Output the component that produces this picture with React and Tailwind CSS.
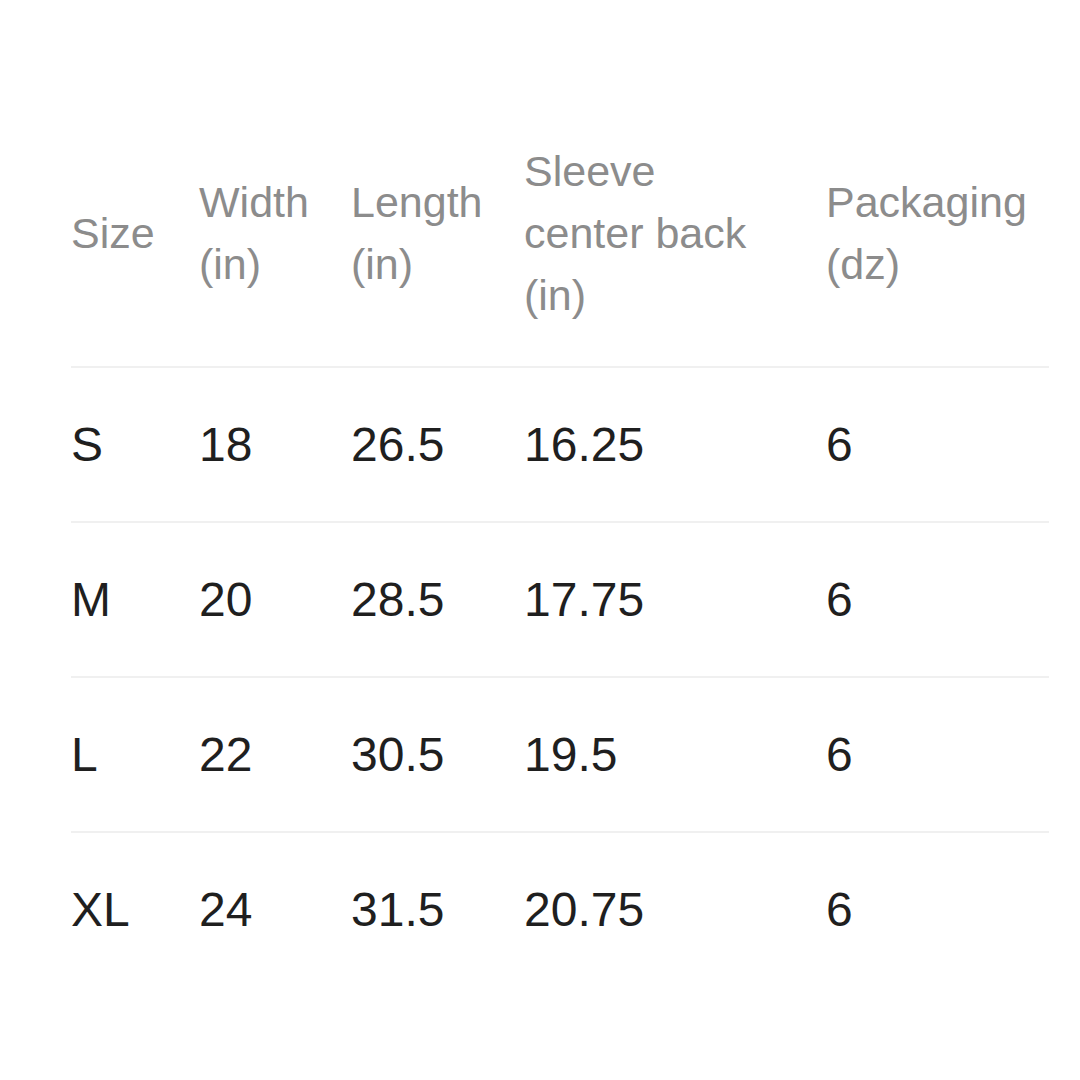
const rows = [
  { size: 'S', width: '18', length: '26.5', sleeve: '16.25', pack: '6' },
  { size: 'M', width: '20', length: '28.5', sleeve: '17.75', pack: '6' },
  { size: 'L', width: '22', length: '30.5', sleeve: '19.5', pack: '6' },
  { size: 'XL', width: '24', length: '31.5', sleeve: '20.75', pack: '6' },
];

export default function App() {
  return (
    <div className="w-[1080px] h-[1080px] bg-white overflow-hidden pt-[100px] pl-[71px]" style={{ fontFamily: '"Liberation Sans", Arial, sans-serif' }}>
      <table className="w-[978px] border-collapse table-fixed">
        <colgroup>
          <col className="w-[128px]" />
          <col className="w-[152px]" />
          <col className="w-[173px]" />
          <col className="w-[302px]" />
          <col className="w-[223px]" />
        </colgroup>
        <thead>
          <tr className="border-b-2 border-[#f0f0f0] text-[43px] leading-[62px] text-[#8c8c8c] text-left">
            <th className="font-normal py-[40px] align-middle">Size</th>
            <th className="font-normal py-[40px] align-middle">Width<br />(in)</th>
            <th className="font-normal py-[40px] align-middle">Length<br />(in)</th>
            <th className="font-normal py-[40px] align-middle">Sleeve<br />center back<br />(in)</th>
            <th className="font-normal py-[40px] align-middle">Packaging<br />(dz)</th>
          </tr>
        </thead>
        <tbody>
          {rows.map((r, i) => (
            <tr key={r.size} className={i < rows.length - 1 ? 'border-b-2 border-[#f0f0f0]' : ''}>
              {[r.size, r.width, r.length, r.sleeve, r.pack].map((v, j) => (
                <td key={j} className="h-[155px] align-middle text-[48px] leading-none text-[#1f1f1f]">{v}</td>
              ))}
            </tr>
          ))}
        </tbody>
      </table>
    </div>
  );
}
